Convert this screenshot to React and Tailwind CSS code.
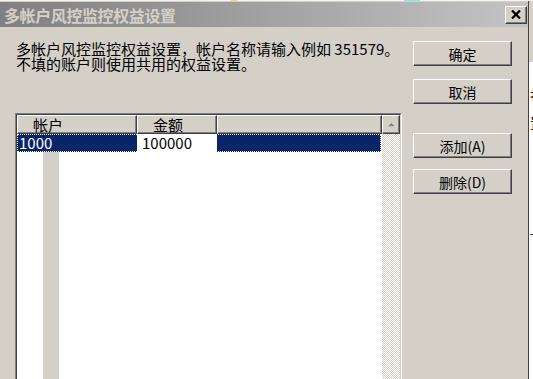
const Btn = ({ children, className = "" }) => (
  <button
    className={`flex h-[25px] w-[99px] items-center justify-center border border-t-white border-l-white border-r-[#404040] border-b-[#404040] bg-[#d4d0c8] text-[14px] leading-none text-black shadow-[inset_-1px_-1px_0_#808080] ${className}`}
  >
    {children}
  </button>
);

const HeaderCell = ({ children, className = "" }) => (
  <div
    className={`h-[19px] border border-t-white border-l-white border-r-[#404040] border-b-[#404040] bg-[#d4d0c8] pl-[15px] text-[15px] leading-[17px] text-black shadow-[inset_-1px_-1px_0_#808080] ${className}`}
  >
    {children}
  </div>
);

export default function App() {
  return (
    <div className="flex h-[379px] w-[533px] flex-col overflow-hidden bg-white font-['Noto_Sans_CJK_SC',sans-serif]">
      {/* top 1px line from the window behind */}
      <div className="flex h-[1px] shrink-0 bg-[#f4f4f0]">
        <div className="w-[231px]" />
        <div className="w-[6px] bg-[#f0e060]" />
        <div className="w-[167px]" />
        <div className="w-[16px] bg-[#7fe8e8]" />
      </div>

      <div className="flex flex-1">
        {/* dialog window */}
        <div className="flex w-[529px] shrink-0 flex-col border-r border-[#404040] bg-[#d4d0c8]">
          <div className="h-[1px] bg-[#d4d0c8]" />

          {/* title bar */}
          <div className="flex h-[25px] items-center justify-between bg-linear-to-r from-[#808080] to-[#c4c4c4] pl-[4px]">
            <span className="text-[16px] font-bold leading-none tracking-[-0.4px] text-[#d4d0c8]">
              多帐户风控监控权益设置
            </span>
            <div className="mr-[1px] flex h-[18px] w-[22px] items-center justify-center border border-t-white border-l-white border-r-[#404040] border-b-[#404040] bg-[#d4d0c8] shadow-[inset_-1px_-1px_0_#808080]">
              <svg width="10" height="9" viewBox="0 0 10 9">
                <path d="M1 0.5 L9 8.5 M9 0.5 L1 8.5" stroke="#000" strokeWidth="2.2" />
              </svg>
            </div>
          </div>

          {/* body */}
          <div className="flex flex-1">
            <div className="flex w-[402px] shrink-0 flex-col pl-[15px] pt-[14px]">
              <p className="ml-[1px] text-[15px] leading-[15px] text-black">
                多帐户风控监控权益设置，帐户名称请输入例如 351579。
                <br />
                不填的账户则使用共用的权益设置。
              </p>

              {/* list view */}
              <div className="mt-[42px] h-[280px] w-[387px] border border-t-[#808080] border-l-[#808080] border-r-white border-b-white">
                <div className="flex h-full border border-t-[#404040] border-l-[#404040] border-r-[#d4d0c8] border-b-[#d4d0c8]">
                  <div className="flex w-[365px] flex-col bg-white">
                    <div className="flex">
                      <HeaderCell className="w-[120px]">帐户</HeaderCell>
                      <HeaderCell className="w-[80px]">金额</HeaderCell>
                      <HeaderCell className="flex-1" />
                    </div>
                    <div className="flex h-[18px] w-[364px] text-[15px] leading-[17px] outline-1 -outline-offset-1 outline-dotted outline-white">
                      <div className="w-[120px] bg-[#0a246a] pl-[2px] text-white">1000</div>
                      <div className="w-[80px] bg-white pl-[5px] text-black">100000</div>
                      <div className="flex-1 bg-[#0a246a]" />
                    </div>
                    <div className="flex flex-1">
                      <div className="w-[26px] bg-white" />
                      <div className="w-[16px] bg-[#d4d0c8]" />
                      <div className="flex-1 bg-white" />
                    </div>
                  </div>

                  {/* scrollbar */}
                  <div className="flex w-[18px] flex-col">
                    <div className="flex h-[19px] items-center justify-center border border-t-white border-l-white border-r-[#404040] border-b-[#404040] bg-[#d4d0c8] shadow-[inset_-1px_-1px_0_#808080]">
                      <svg width="9" height="6" viewBox="0 0 9 6">
                        <path d="M1.5 5 L8.5 5 L5 1.5 Z" fill="#fff" />
                        <path d="M1 4.5 L8 4.5 L4.5 1 Z" fill="#808080" />
                      </svg>
                    </div>
                    <div className="flex-1 bg-[repeating-conic-gradient(#d4d0c8_0%_25%,#ffffff_0%_50%)] [background-size:2px_2px]" />
                  </div>
                </div>
              </div>
            </div>

            {/* buttons */}
            <div className="flex flex-col pl-[11px] pt-[14px]">
              <Btn>确定</Btn>
              <Btn className="mt-[13px]">取消</Btn>
              <Btn className="mt-[29px]">添加(A)</Btn>
              <Btn className="mt-[11px]">删除(D)</Btn>
            </div>
          </div>
        </div>

        {/* edge of the window behind */}
        <div className="flex flex-1 flex-col overflow-hidden">
          <div className="h-[61px] bg-[#d4d0c8]" />
          <div className="flex flex-1 flex-col bg-white pl-[1px] text-[15px] leading-[15px] text-black">
            <span className="mt-[25px] block w-[4px] overflow-hidden">扫</span>
            <span className="mt-[13px] block w-[4px] overflow-hidden">置</span>
            <div className="mt-[104px] h-[1px] w-[3px] bg-[#404040]" />
          </div>
        </div>
      </div>
    </div>
  );
}
